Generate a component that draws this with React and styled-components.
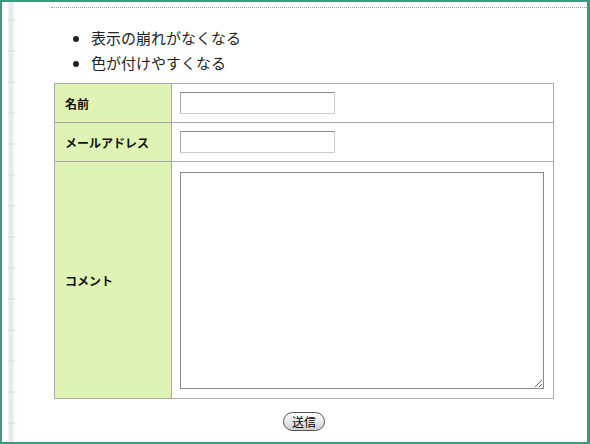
import React from 'react';
import styled, { createGlobalStyle } from 'styled-components';

const GlobalStyle = createGlobalStyle`
  html, body {
    margin: 0;
    padding: 0;
    background: #fff;
  }
  body {
    font-family: "Noto Sans CJK JP", "DejaVu Sans", sans-serif;
    color: #111;
  }
`;

const Frame = styled.div`
  box-sizing: border-box;
  width: 590px;
  height: 444px;
  border: 2px solid #3a9a80;
  border-right-width: 3px;
  display: flex;
  overflow: hidden;
  background: #fff;
`;

/* torn paper edge on the left */
const PaperEdge = styled.div`
  width: 7px;
  margin-left: 6px;
  flex: none;
  background:
    repeating-linear-gradient(180deg, rgba(255,255,255,0) 0 17px, rgba(215,215,215,0.5) 17px 19px, rgba(255,255,255,0) 19px 31px),
    linear-gradient(90deg, #f6f6f6 0%, #e6e6e6 40%, #efefef 70%, #fff 100%);
`;

const Main = styled.div`
  flex: 1;
  padding-left: 36px;
  padding-top: 5px;
`;

const DottedRule = styled.div`
  border-top: 1px dotted #999;
`;

const List = styled.ul`
  margin: 17px 0 8px;
  padding-left: 40px;
  list-style: disc;
  font-size: 15px;
  line-height: 25px;
  color: #222;
`;

const FormTable = styled.table`
  margin-left: 3px;
  width: 500px;
  border-collapse: collapse;
  border: 1px solid #aaa;
`;

const Row = styled.tr`
  height: ${(p) => p.$h}px;
`;

const Label = styled.th`
  width: 106px;
  padding: 0 0 0 10px;
  text-align: left;
  font-size: 12px;
  font-weight: bold;
  background: #dff3b4;
  border: 1px solid #aaa;
  color: #111;
`;

const Cell = styled.td`
  padding: 0 0 0 8px;
  border: 1px solid #aaa;
  vertical-align: middle;
`;

const TextInput = styled.input`
  box-sizing: border-box;
  display: block;
  width: 155px;
  height: 22px;
  margin: 0;
  padding: 2px 4px;
  border: 1px solid #ccc;
  border-top-color: #888;
  border-left-color: #aaa;
  font-size: 12px;
`;

const TextArea = styled.textarea`
  box-sizing: border-box;
  display: block;
  width: 364px;
  height: 217px;
  margin: 10px 0 9px;
  padding: 2px;
  border: 1px solid #888;
  resize: both;
  font-size: 12px;
`;

const ButtonRow = styled.div`
  width: 500px;
  margin-left: 3px;
  margin-top: 13px;
  display: flex;
  justify-content: center;
`;

const Submit = styled.button`
  height: 19px;
  padding: 0 8px;
  border: 1px solid #555;
  border-radius: 10px;
  background: linear-gradient(#ffffff, #e4e4e4 60%, #cfcfcf);
  font-family: "Noto Sans CJK JP", sans-serif;
  font-size: 12px;
  line-height: 15px;
  color: #000;
`;

export default function App() {
  return (
    <>
      <GlobalStyle />
      <Frame>
        <PaperEdge />
        <Main>
          <DottedRule />
          <List>
            <li>表示の崩れがなくなる</li>
            <li>色が付けやすくなる</li>
          </List>
          <FormTable>
            <tbody>
              <Row $h={39}>
                <Label>名前</Label>
                <Cell><TextInput type="text" /></Cell>
              </Row>
              <Row $h={39}>
                <Label>メールアドレス</Label>
                <Cell><TextInput type="text" /></Cell>
              </Row>
              <Row $h={235}>
                <Label>コメント</Label>
                <Cell><TextArea /></Cell>
              </Row>
            </tbody>
          </FormTable>
          <ButtonRow>
            <Submit type="submit">送信</Submit>
          </ButtonRow>
        </Main>
      </Frame>
    </>
  );
}
